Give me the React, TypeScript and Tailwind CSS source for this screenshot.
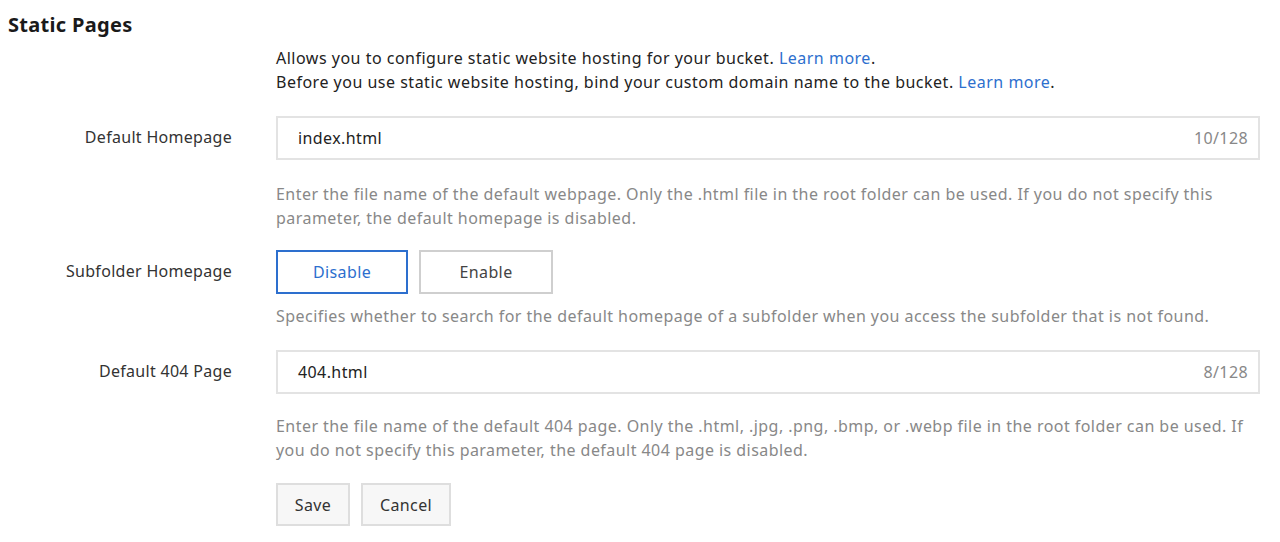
import React from "react";

const font = { fontFamily: '"Noto Sans", "Liberation Sans", sans-serif' };

function Row({ label, children }: { label: string; children: React.ReactNode }) {
  return (
    <div className="flex">
      <div className="w-[224px] shrink-0 pt-[9px] text-right text-[16px] tracking-[0.3px] text-[#333]">{label}</div>
      <div className="ml-[44px] flex-1">{children}</div>
    </div>
  );
}

function TextField({ value, count }: { value: string; count: string }) {
  return (
    <div className="flex h-[44px] w-[984px] items-center justify-between border-2 border-[#e3e3e3] bg-white pl-[20px] pr-[10px] text-[16px] tracking-[0.4px]">
      <span className="text-[#222]">{value}</span>
      <span className="text-[#888]">{count}</span>
    </div>
  );
}

function Help({ children, className = "mt-[20px]" }: { children: React.ReactNode; className?: string }) {
  return <p className={`${className} text-[16px] leading-[24px] tracking-[0.45px] text-[#888]`}>{children}</p>;
}

export default function App() {
  return (
    <div className="min-h-[542px] bg-white px-[8px] pt-[11px]" style={font}>
      <h2 className="text-[20px] font-bold leading-[28px] tracking-[0.3px] text-[#1a1a1a]">Static Pages</h2>
      <div className="ml-[268px] mt-[7px] text-[16px] leading-[24px] tracking-[0.5px] text-[#222]">
        <p>
          Allows you to configure static website hosting for your bucket.{" "}
          <a className="text-[#2d6fce]">Learn more</a>.
        </p>
        <p>
          Before you use static website hosting, bind your custom domain name to the bucket.{" "}
          <a className="text-[#2d6fce]">Learn more</a>.
        </p>
      </div>

      <div className="mt-[22px] flex flex-col">
        <Row label="Default Homepage">
          <TextField value="index.html" count="10/128" />
          <Help className="mt-[22px]">
            Enter the file name of the default webpage. Only the .html file in the root folder can be used. If you do not specify this
            <br />
            parameter, the default homepage is disabled.
          </Help>
        </Row>

        <div className="mt-[20px]">
          <Row label="Subfolder Homepage">
            <div className="flex gap-[11px] tracking-[0.4px]">
              <button className="h-[44px] w-[132px] border-2 border-[#2d6fce] text-[16px] text-[#2d6fce]">Disable</button>
              <button className="h-[44px] w-[134px] border-2 border-[#cfcfcf] text-[16px] text-[#444]">Enable</button>
            </div>
            <Help className="mt-[10px]">
              Specifies whether to search for the default homepage of a subfolder when you access the subfolder that is not found.
            </Help>
          </Row>
        </div>

        <div className="mt-[22px]">
          <Row label="Default 404 Page">
            <TextField value="404.html" count="8/128" />
            <Help>
              Enter the file name of the default 404 page. Only the .html, .jpg, .png, .bmp, or .webp file in the root folder can be used. If
              <br />
              you do not specify this parameter, the default 404 page is disabled.
            </Help>
            <div className="mt-[21px] flex gap-[11px] tracking-[0.4px]">
              <button className="h-[43px] w-[74px] border-2 border-[#dedede] bg-[#f7f7f7] text-[16px] text-[#333]">Save</button>
              <button className="h-[43px] w-[90px] border-2 border-[#dedede] bg-[#f7f7f7] text-[16px] text-[#333]">Cancel</button>
            </div>
          </Row>
        </div>
      </div>
    </div>
  );
}
